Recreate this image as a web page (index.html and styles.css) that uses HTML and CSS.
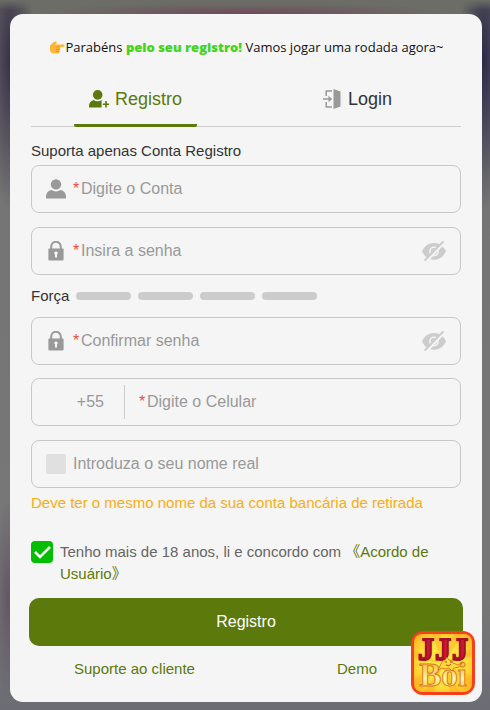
FILE: index.html
```html
<!DOCTYPE html>
<html lang="pt-BR">
<head>
  <meta charset="utf-8">
  <meta name="viewport" content="width=device-width, initial-scale=1">
  <title>Registro</title>
  <link rel="stylesheet" href="styles.css">
</head>
<body>
  <svg class="symbols" aria-hidden="true">
    <symbol id="icon-user" viewBox="0 0 20 20">
      <circle cx="10" cy="5.4" r="5.2"/>
      <path d="M0 19.6v-2.2c0-3.4 2.2-5.6 5.4-6.4 2.8 1.9 6.4 1.9 9.2 0 3.2.8 5.4 3 5.4 6.4v2.2z"/>
    </symbol>
    <symbol id="icon-lock" viewBox="0 0 16 20">
      <path d="M3.2 9V5.6a4.8 4.8 0 0 1 9.6 0V9" fill="none" stroke="currentColor" stroke-width="2"/>
      <path fill-rule="evenodd" d="M1.4 7.6h13.2c.7 0 1 .4 1 1v9.6c0 .8-.4 1.2-1.2 1.2H1.6c-.8 0-1.2-.4-1.2-1.2V8.6c0-.6.3-1 1-1zM8 10.4a1.7 1.7 0 0 0-1 3.1v3.1h2v-3.1a1.7 1.7 0 0 0-1-3.1z"/>
    </symbol>
    <symbol id="icon-eye-off" viewBox="0 0 24 20">
      <path fill-rule="evenodd" d="M0 10.3C2.6 4.8 6.7 2 12 2s9.4 2.8 12 8.3c-2.6 5.7-6.7 8.5-12 8.5S2.6 16 0 10.3zM12 5.6a4.9 4.9 0 1 0 0 9.8 4.9 4.9 0 0 0 0-9.8z"/>
      <circle cx="12" cy="10.5" r="2.4" fill="none" stroke="currentColor" stroke-width="2"/>
      <path d="M4 20.5 23 .5" stroke="#f5f5f5" stroke-width="3"/>
      <path d="M2.6 19.6 21.4.4" stroke="currentColor" stroke-width="2"/>
    </symbol>
  </svg>

  <main class="card">
    <p class="banner">
      <svg class="hand" viewBox="0 0 16 16" aria-hidden="true">
        <path d="M1 6.5C3 5 4 3 6.5 2.6c1.6-.2 1.6 1.3.5 2.1l-.8.7h8.1c1.7 0 1.7 2.5 0 2.5h-3.5c.9.6.8 1.8 0 2.3.6.8.3 1.8-.5 2.2.3 1.3-.4 2.1-1.7 2.1H5.2C2.8 14.5 1 13 1 10.5z" fill="#ffb636"/>
        <path d="M7.2 7.9h3.6M7.2 10.2h3.6M7 12.4h3.2" stroke="#e48a1c" stroke-width=".8"/>
      </svg>
      <span>Parabéns <strong>pelo seu registro!</strong> Vamos jogar uma rodada agora~</span>
    </p>

    <nav class="tabs">
      <button type="button" class="tab active">
        <svg class="tab-icon" viewBox="0 0 20 18" aria-hidden="true">
          <circle cx="8.7" cy="4.9" r="4.8"/>
          <path d="M0 17.5v-1.3c0-3.1 1.6-5.2 4.6-6.1 2.5 1.6 5.5 1.6 8 0v7.4z"/>
          <path d="M17 11v6.4M13.8 14.2h6.4" stroke="currentColor" stroke-width="1.6"/>
        </svg>
        Registro
      </button>
      <button type="button" class="tab">
        <svg class="tab-icon gray" viewBox="0 0 20 20" aria-hidden="true">
          <path d="M11.5 0 18.5 2.5v15L11.5 20z"/>
          <path d="M10 2H4.2v5M4.2 13v5H10M1 10h7" fill="none" stroke="currentColor" stroke-width="1.5"/>
          <path d="M6.5 6.8 10.2 10 6.5 13.2z"/>
        </svg>
        Login
      </button>
    </nav>

    <form onsubmit="return false">
      <p class="hint">Suporta apenas Conta Registro</p>

      <div class="field">
        <svg class="icon" aria-hidden="true"><use href="#icon-user"/></svg>
        <label class="required" for="account">*</label>
        <input type="text" id="account" placeholder="Digite o Conta" aria-label="Conta">
      </div>

      <div class="field">
        <svg class="icon" aria-hidden="true"><use href="#icon-lock"/></svg>
        <label class="required" for="password">*</label>
        <input type="password" id="password" placeholder="Insira a senha" aria-label="Senha">
        <button type="button" class="eye" aria-label="Mostrar senha"><svg aria-hidden="true"><use href="#icon-eye-off"/></svg></button>
      </div>

      <div class="strength">
        <span>Força</span>
        <i></i><i></i><i></i><i></i>
      </div>

      <div class="field">
        <svg class="icon" aria-hidden="true"><use href="#icon-lock"/></svg>
        <label class="required" for="confirm">*</label>
        <input type="password" id="confirm" placeholder="Confirmar senha" aria-label="Confirmar senha">
        <button type="button" class="eye" aria-label="Mostrar senha"><svg aria-hidden="true"><use href="#icon-eye-off"/></svg></button>
      </div>

      <div class="field">
        <span class="prefix">+55</span>
        <label class="required" for="phone">*</label>
        <input type="tel" id="phone" placeholder="Digite o Celular" aria-label="Celular">
      </div>

      <div class="field">
        <span class="blank-icon"></span>
        <input type="text" id="realname" placeholder="Introduza o seu nome real" aria-label="Nome real">
      </div>
      <p class="note">Deve ter o mesmo nome da sua conta bancária de retirada</p>

      <div class="agree">
        <input type="checkbox" id="agree" checked>
        <label for="agree">Tenho mais de 18 anos, li e concordo com <a href="#">《Acordo de Usuário》</a></label>
      </div>

      <button type="submit" class="submit">Registro</button>
    </form>

    <div class="links">
      <a href="#">Suporte ao cliente</a>
      <a href="#">Demo</a>
    </div>

    <!-- floating app badge -->
    <svg class="badge" viewBox="0 0 66 66" role="img" aria-label="JJJ Boi">
      <defs>
        <radialGradient id="sun" r=".7">
          <stop offset="0" stop-color="#fff04a"/>
          <stop offset=".6" stop-color="#ffdc38"/>
          <stop offset="1" stop-color="#ffab1c"/>
        </radialGradient>
        <linearGradient id="gold" x2="0" y2="1">
          <stop offset="0" stop-color="#f7a325"/>
          <stop offset=".6" stop-color="#fff5a8"/>
          <stop offset="1" stop-color="#f7b52d"/>
        </linearGradient>
      </defs>
      <rect x="1" y="1" width="64" height="64" rx="12" fill="#f4401c"/>
      <rect x="4" y="4" width="58" height="58" rx="8" fill="url(#sun)"/>
      <path d="M33 34 4 48v10zM33 34 14 62h10zM33 34 40 62h10zM33 34 62 46v10zM33 34 4 20v8zM33 34 62 18v8zM33 34 22 4h9zM33 34 44 4h9z" fill="#ff9d1e" opacity=".35"/>
      <text class="badge-top" x="8 25 42" y="30">JJJ</text>
      <text class="badge-bottom" x="33" y="56" text-anchor="middle">Boi</text>
      <path d="M31 34q1-4 4-4l2-3 2 3q4 0 4 3l5 2 4-2-3 4-5 1-2 3-3-3-4 1-3-1-4 2 2-4z" fill="#ffd83c" stroke="#d6661c" stroke-width=".8"/>
      <path d="M35 32h2M40 32h2M36 35q3 2 5-1" stroke="#b8431c" fill="none"/>
    </svg>
  </main>
</body>
</html>
```
FILE: styles.css
```css
* { box-sizing: border-box; }
body {
  margin: 0;
  min-height: 100vh;
  padding: 14px 8px 8px 10px;
  font-family: "Liberation Sans", Arial, "Noto Sans CJK SC", sans-serif;
  font-size: 15px;
  line-height: 22px;
  color: #333;
  background:
    linear-gradient(#6b6d66, transparent 10px),
    radial-gradient(ellipse 200px 14px at 50% 14px, #6f4a5c, transparent),
    radial-gradient(ellipse 24px 150px at 10px 60px, #38304a, transparent),
    radial-gradient(ellipse 24px 150px at 484px 60px, #2c2a4a, transparent),
    radial-gradient(ellipse 14px 100px at 8px 600px, #625664, transparent),
    linear-gradient(#6b6d66, #757575 200px, #777 600px, #6c6c74);
}
p { margin: 0; }
a { color: #5c790b; text-decoration: none; }
button { font: inherit; border: 0; background: none; padding: 0; }
.symbols { display: none; }

.card {
  position: relative;
  background: #f5f5f5;
  border-radius: 13px;
  padding: 22px 21px;
}
.banner {
  display: flex;
  align-items: center;
  justify-content: center;
  gap: 1px;
  font-family: "Open Sans", "Noto Sans", sans-serif;
  font-size: 13px;
  color: #111;
  white-space: nowrap;
}
.banner strong { color: #43d31c; font-weight: 800; }
.hand { width: 16px; height: 16px; }

.tabs {
  display: flex;
  justify-content: space-between;
  margin-top: 14px;
  padding: 0 54px 0 43px;
  border-bottom: 1px solid #ccc;
}
.tab {
  display: flex;
  align-items: center;
  gap: 6px;
  height: 55px;
  margin-bottom: -1px;
  padding: 1px 15px 0;
  border-bottom: 3px solid transparent;
  font-size: 18px;
  color: #333;
}
.tab.active { color: #5c790b; border-color: #5c790b; border-radius: 2px; }
.tab-icon { width: 20px; height: 20px; fill: currentColor; }
.gray { color: #999; }

.hint { margin: 13px 0 3px; }
.field {
  display: flex;
  align-items: center;
  height: 48px;
  margin-bottom: 14px;
  padding: 0 14px;
  border: 1px solid #c8c8c8;
  border-radius: 8px;
  font-size: 16px;
}
.field input {
  flex: 1;
  min-width: 0;
  height: 40px;
  padding: 0;
  border: 0;
  outline: 0;
  background: none;
  font: inherit;
  color: #333;
}
.field input::placeholder { color: #999; opacity: 1; }
.icon, .blank-icon { width: 20px; height: 20px; margin-right: 7px; color: #999; fill: currentColor; }
.blank-icon { background: #e0e0e0; border-radius: 2px; }
.required { width: 8px; color: #ea4e3d; }
.eye { width: 24px; height: 20px; color: #ccc; }
.eye svg { display: block; width: 24px; height: 20px; fill: currentColor; }
.prefix {
  width: 79px;
  margin-right: 14px;
  padding-right: 20px;
  border-right: 1px solid #ccc;
  line-height: 34px;
  text-align: right;
  color: #999;
}
.strength { display: flex; align-items: center; gap: 7px; margin: -4px 0 10px; }
.strength i { width: 55px; height: 8px; border-radius: 4px; background: #ccc; }
.strength + .field { margin-bottom: 13px; }
.note { margin-top: -10px; color: #faad14; }

.agree { display: flex; gap: 7px; margin: 27px 0 13px; color: #666; }
.agree input {
  appearance: none;
  flex: none;
  width: 22px;
  height: 22px;
  margin: 0;
  border-radius: 4px;
  background: #04be02 url("data:image/svg+xml,%3Csvg xmlns='http://www.w3.org/2000/svg' viewBox='0 0 22 22'%3E%3Cpath d='M4 11l5 5 10-10' fill='none' stroke='white' stroke-width='2.5'/%3E%3C/svg%3E");
}
.submit {
  display: block;
  width: calc(100% + 4px);
  height: 48px;
  margin: 0 -2px;
  border-radius: 10px;
  background: #5c790b;
  color: #fff;
  font-size: 16px;
}
.links {
  display: flex;
  justify-content: space-between;
  padding: 12px 84px 0 43px;
}
.badge { position: absolute; right: 6px; bottom: 6px; width: 66px; height: 66px; }
.badge text { font-family: "Liberation Serif", serif; font-weight: bold; }
.badge-top { font-size: 32px; fill: #cf1730; stroke: #a01028; stroke-width: 2px; }
.badge-bottom { font-size: 33px; fill: url(#gold); stroke: #d8791c; stroke-width: 1px; }
```
